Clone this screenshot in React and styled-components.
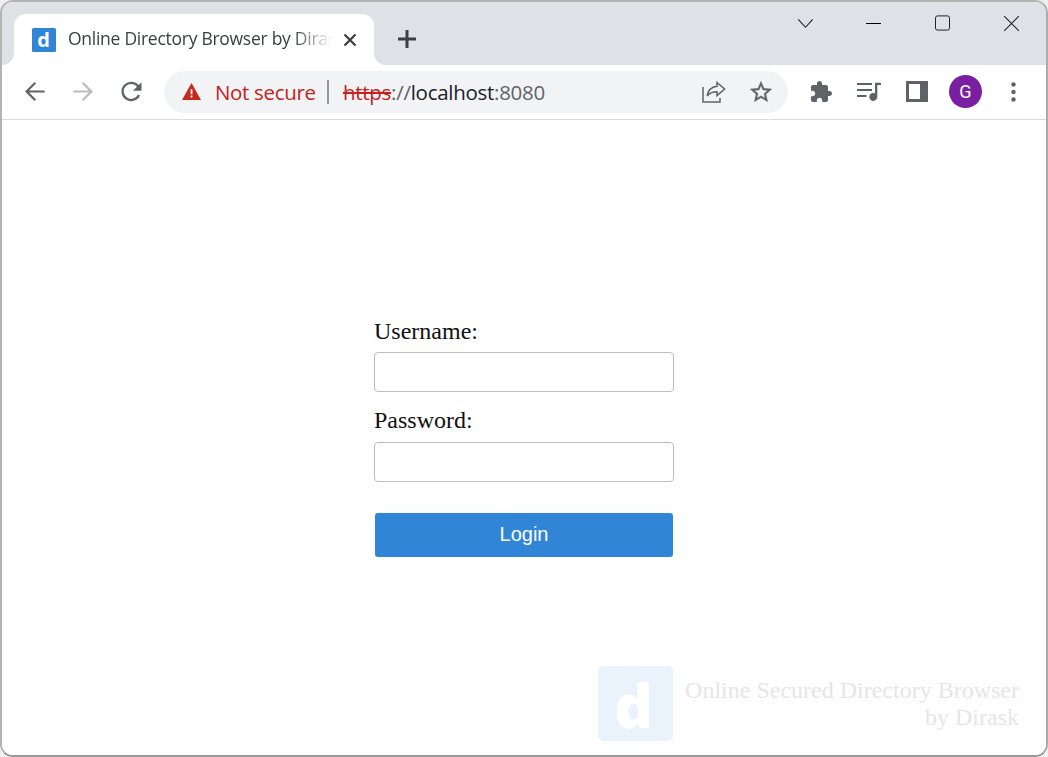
import React from "react";
import styled, { createGlobalStyle, css } from "styled-components";

const ui = `"Open Sans", "Noto Sans", sans-serif`;
const serif = `"Liberation Serif", "Times New Roman", serif`;

const GlobalStyle = createGlobalStyle`
  *, *::before, *::after { box-sizing: border-box; }
  body { margin: 0; background: #f0f0f0; overflow: hidden; }
`;

const Window = styled.div`
  display: flex;
  flex-direction: column;
  width: 1048px;
  height: 757px;
  border: 2px solid #b3b3b3;
  border-right-color: #ababab;
  border-bottom-color: #989898;
  border-radius: 13px;
  background: #fff;
  overflow: hidden;
`;

const TabStrip = styled.header`
  display: flex;
  flex: none;
  height: 63px;
  padding-left: 12px;
  background: #dee1e6;
`;

const Tab = styled.div`
  position: relative;
  display: flex;
  align-items: center;
  width: 360px;
  height: 51px;
  margin-top: 12px;
  padding: 0 10px 0 18px;
  border-radius: 12px 12px 0 0;
  background: #fff;

  &::before,
  &::after {
    content: "";
    position: absolute;
    bottom: 0;
    width: 12px;
    height: 12px;
  }
  &::before {
    left: -12px;
    background: radial-gradient(circle at 0 0, transparent 11.5px, #fff 12.5px);
  }
  &::after {
    right: -12px;
    background: radial-gradient(circle at 100% 0, transparent 11.5px, #fff 12.5px);
  }
`;

const TabTitle = styled.span`
  flex: none;
  width: 268px;
  margin-left: 12px;
  padding-bottom: 3px;
  overflow: hidden;
  white-space: nowrap;
  font: 17.5px/26px ${ui};
  letter-spacing: -0.27px;
  color: #3c4043;
  mask-image: linear-gradient(to right, #000 225px, transparent 264px);
`;

const Icon = styled.svg`
  display: block;
  flex: none;
  overflow: visible;
`;

const IconButton = styled.button`
  display: flex;
  flex: none;
  align-items: center;
  justify-content: center;
  width: ${(p) => p.$width}px;
  height: ${(p) => p.$height}px;
  padding: 0;
  border: 0;
  background: none;
  color: ${(p) => p.$color || "#5f6368"};
`;

const WindowControls = styled.div`
  display: flex;
  margin-left: auto;
`;

const Toolbar = styled.nav`
  display: flex;
  flex: none;
  align-items: center;
  height: 55px;
  padding: 0 9px 1px 9px;
  border-bottom: 1px solid #dadce0;
`;

const AddressBar = styled.div`
  display: flex;
  align-items: center;
  width: 624px;
  height: 42px;
  margin: 0 9px;
  padding: 0 3px 0 18px;
  border-radius: 21px;
  background: #f1f3f4;
  font: 20.5px/30px ${ui};
  white-space: nowrap;
`;

const SecurityLabel = styled.span`
  width: 100px;
  margin-left: 14px;
  padding-top: 1px;
  letter-spacing: -0.33px;
  color: #c5221f;
`;

const Divider = styled.span`
  width: 2px;
  height: 24px;
  margin: 0 14px 0 12px;
  background: #96999c;
`;

const Address = styled.span`
  flex: 1;
  padding-top: 1px;
  letter-spacing: -0.28px;
  color: #5f6368;
`;

const Scheme = styled.s`
  color: #c5221f;
  text-decoration-thickness: 1.5px;
`;

const Host = styled.span`
  color: #202124;
`;

const Avatar = styled.div`
  display: grid;
  place-items: center;
  flex: none;
  width: 33px;
  height: 33px;
  margin: 0 7px 0 8px;
  border-radius: 50%;
  background: #7b1fa2;
  color: #fff;
  font: 18px/33px Roboto, sans-serif;
`;

const Page = styled.main`
  display: flex;
  flex: 1;
  flex-direction: column;
  background: #fefefe;
`;

const LoginForm = styled.form`
  display: flex;
  flex-direction: column;
  width: 300px;
  margin: 197px auto 0;
`;

const fieldText = css`
  font: 24px/28px ${serif};
  color: #111;
`;

const Field = styled.label`
  ${fieldText}
  display: flex;
  flex-direction: column;
  gap: ${(p) => p.$gap}px;
  margin-bottom: 14px;
`;

const TextInput = styled.input`
  width: 100%;
  height: 40px;
  padding: 0 8px;
  border: 1px solid #bdbdbd;
  border-radius: 4px;
  background: #fff;
  outline: none;
`;

const SubmitButton = styled.button`
  height: 44px;
  margin: 17px 1px 0;
  padding: 0 0 2px;
  border: 0;
  border-radius: 3px;
  background: #3085d6;
  color: #fff;
  font: 20px/24px "Liberation Sans", Arial, sans-serif;
`;

const Footer = styled.footer`
  display: flex;
  justify-content: flex-end;
  gap: 12px;
  margin: auto 27px 14px 0;
  text-align: right;
  font: 24px/27px ${serif};
  color: #e6e6e6;
`;

const FooterText = styled.p`
  margin: 11px 0 0;
`;

const Logo = styled.span`
  display: flex;
  flex: none;
  justify-content: center;
  width: ${(p) => p.$size}px;
  height: ${(p) => p.$size}px;
  padding-right: ${(p) => (p.$size > 40 ? 4 : 1)}px;
  border-radius: ${(p) => (p.$size > 40 ? 5 : 1.5)}px;
  background: ${(p) => p.$color};
  color: #fff;
  font: ${(p) => (p.$size > 40 ? 800 : 700)} ${(p) => p.$font}px/${(p) => p.$line}px ${ui};
`;

export default function App() {
  return (
    <>
      <GlobalStyle />
      <Window>
        <TabStrip>
          <Tab>
            <Logo $size={24} $color="#3085d6" $font={20} $line={24}>d</Logo>
            <TabTitle>Online Directory Browser by Dirask</TabTitle>
            <IconButton $width={28} $height={28} $color="#3c4043" aria-label="Close tab">
              <Icon width="12" height="12" viewBox="0 0 12 12" fill="none" stroke="currentColor" strokeWidth="2.3">
                <path d="M.5.5l11 11M11.5.5l-11 11" />
              </Icon>
            </IconButton>
          </Tab>
          <IconButton $width={66} $height={74} $color="#3c4043" aria-label="New tab">
            <Icon width="18" height="18" viewBox="0 0 18 18" fill="none" stroke="currentColor" strokeWidth="3">
              <path d="M9 0v18M0 9h18" />
            </Icon>
          </IconButton>
          <WindowControls>
            <IconButton $width={68} $height={42} $color="#222" aria-label="Search tabs">
              <Icon width="15" height="9" viewBox="0 0 15 9" fill="none" stroke="currentColor" strokeWidth="1.1">
                <path d="M.3.3l7.2 8 7.2-8" />
              </Icon>
            </IconButton>
            <IconButton $width={69} $height={42} $color="#000" aria-label="Minimize">
              <Icon width="15" height="1" viewBox="0 0 15 1" fill="currentColor">
                <path d="M0 0h15v1H0z" />
              </Icon>
            </IconButton>
            <IconButton $width={69} $height={42} $color="#222" aria-label="Maximize">
              <Icon width="15" height="16" viewBox="0 0 15 16" fill="none" stroke="currentColor">
                <rect x=".5" y=".9" width="14" height="14.2" rx="2" />
              </Icon>
            </IconButton>
            <IconButton $width={69} $height={42} $color="#222" aria-label="Close">
              <Icon width="15" height="15" viewBox="0 0 15 15" fill="none" stroke="currentColor" strokeWidth="1.1">
                <path d="M.2.2l14.6 14.6M14.8.2L.2 14.8" />
              </Icon>
            </IconButton>
          </WindowControls>
        </TabStrip>

        <Toolbar>
          <IconButton $width={48} $height={48} aria-label="Back">
            <Icon width="20" height="19" viewBox="0 0 20 19" fill="none" stroke="currentColor" strokeWidth="2.2">
              <path d="M19.7 9.5H1.8M10.3.8L1.6 9.5l8.7 8.7" />
            </Icon>
          </IconButton>
          <IconButton $width={48} $height={48} $color="#babcbe" aria-label="Forward">
            <Icon width="20" height="19" viewBox="0 0 20 19" fill="none" stroke="currentColor" strokeWidth="2.2">
              <path d="M.3 9.5h17.9M9.7.8l8.7 8.7-8.7 8.7" />
            </Icon>
          </IconButton>
          <IconButton $width={48} $height={48} aria-label="Reload">
            <Icon width="21" height="20" viewBox="0 0 21 20">
              <path d="M17.3 4.6A8.6 8.6 0 1 0 18 13" fill="none" stroke="currentColor" strokeWidth="2.3" />
              <path d="M20.5.3v8.4H12z" fill="currentColor" />
            </Icon>
          </IconButton>
          <AddressBar>
            <Icon width="19" height="17" viewBox="0 0 19 17">
              <path d="M9.5 0L19 17H0z" fill="#c5291f" />
              <path d="M8.6 6.3h1.8v5H8.6zM8.6 12.6h1.8v1.9H8.6z" fill="#fff" />
            </Icon>
            <SecurityLabel>Not secure</SecurityLabel>
            <Divider />
            <Address>
              <Scheme>https</Scheme>://<Host>localhost</Host>:8080
            </Address>
            <IconButton $width={47} $height={42} aria-label="Share">
              <Icon width="24" height="22" viewBox="0 0 24 22" fill="none" stroke="currentColor" strokeWidth="1.5">
                <path d="M1 6v15h17v-4" />
                <path d="M15 1.5L22.6 8 15 14.5v-3.7c-4.5 0-7.7 1.2-9.8 4.2.7-5.4 3.9-9 9.8-9.7z" strokeLinejoin="miter" />
              </Icon>
            </IconButton>
            <IconButton $width={48} $height={42} aria-label="Bookmark">
              <Icon width="26" height="26" viewBox="0 0 24 24" fill="currentColor" stroke="currentColor" strokeWidth=".3">
                <path d="M22 9.24l-7.19-.62L12 2 9.19 8.63 2 9.24l5.46 4.73L5.82 21 12 17.27 18.18 21l-1.63-7.03L22 9.24zM12 15.4l-3.76 2.27 1-4.28-3.32-2.88 4.38-.38L12 6.1l1.71 4.04 4.38.38-3.32 2.88 1 4.28L12 15.4z" />
              </Icon>
            </IconButton>
          </AddressBar>
          <IconButton $width={47} $height={48} aria-label="Extensions">
            <Icon width="24" height="24" viewBox="0 0 24 24" fill="currentColor">
              <path d="M20.5 11H19V7c0-1.1-.9-2-2-2h-4V3.5C13 2.12 11.88 1 10.5 1S8 2.12 8 3.5V5H4c-1.1 0-1.99.9-1.99 2v3.8H3.5c1.49 0 2.7 1.21 2.7 2.7s-1.21 2.7-2.7 2.7H2V20c0 1.1.9 2 2 2h3.8v-1.5c0-1.49 1.21-2.7 2.7-2.7 1.49 0 2.7 1.21 2.7 2.7V22H17c1.1 0 2-.9 2-2v-4h1.5c1.38 0 2.5-1.12 2.5-2.5S21.88 11 20.5 11z" />
            </Icon>
          </IconButton>
          <IconButton $width={49} $height={48} aria-label="Media controls">
            <Icon width="24" height="19" viewBox="0 0 24 19">
              <path d="M0 2h15M0 8h15M0 14h9.5" fill="none" stroke="currentColor" strokeWidth="2.1" />
              <path d="M18 .8h6V3h-3.7v11.7A4 4 0 1 1 18 11.3z" fill="currentColor" />
            </Icon>
          </IconButton>
          <IconButton $width={48} $height={48} aria-label="Side panel">
            <Icon width="22" height="21" viewBox="0 0 22 21" fill="currentColor">
              <path fillRule="evenodd" d="M0 0h22v21H0zM3 3v15h11V3z" />
            </Icon>
          </IconButton>
          <Avatar>G</Avatar>
          <IconButton $width={48} $height={48} aria-label="Menu">
            <Icon width="5" height="20" viewBox="0 0 5 20" fill="currentColor">
              <circle cx="2.5" cy="2.5" r="2.2" />
              <circle cx="2.5" cy="10" r="2.2" />
              <circle cx="2.5" cy="17.5" r="2.2" />
            </Icon>
          </IconButton>
        </Toolbar>

        <Page>
          <LoginForm>
            <Field $gap={7}>
              Username:
              <TextInput type="text" />
            </Field>
            <Field $gap={8}>
              Password:
              <TextInput type="password" />
            </Field>
            <SubmitButton type="button">Login</SubmitButton>
          </LoginForm>
          <Footer>
            <Logo $size={75} $color="#eaf3fb" $font={60} $line={79}>d</Logo>
            <FooterText>
              Online Secured Directory Browser
              <br />
              by Dirask
            </FooterText>
          </Footer>
        </Page>
      </Window>
    </>
  );
}
